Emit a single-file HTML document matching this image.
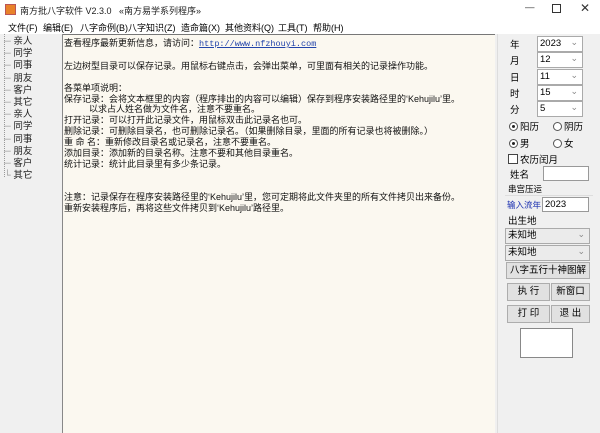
<!DOCTYPE html>
<html><head><meta charset="utf-8"><style>
*{margin:0;padding:0;box-sizing:border-box}
body{width:600px;height:433px;overflow:hidden;background:#f0f0f0;font-family:"Liberation Sans","Noto Sans CJK SC",sans-serif;font-size:9.5px;color:#000;position:relative}
.a{position:absolute;white-space:nowrap}
.title{left:0;top:0;width:600px;height:19px;background:#fff}
.menu{left:0;top:19px;width:600px;height:15px;background:#fff;font-size:9px}
.left{left:0;top:34px;width:63px;height:399px;background:#f0f0f0;border-right:1px solid #888}
.txt{left:63px;top:34px;width:432px;height:399px;background:#fbf8f0;border-top:1px solid #777}
.txt pre{font-family:"Liberation Sans","Noto Sans CJK SC",sans-serif;font-size:9px;line-height:10.9px;position:absolute;left:1px;top:3px;color:#111}
.sel{position:absolute;background:#fff;border:1px solid #aaa;height:16px;font-size:9.5px;padding-left:2px;line-height:14px}
.sel:after{content:"⌄";position:absolute;right:4px;top:-2px;color:#888;font-size:9px}
.btn{position:absolute;background:#e1e1e1;border:1px solid #adadad;text-align:center;font-size:9.5px}
.inp{position:absolute;background:#fff;border:1px solid #999}
.rad{display:inline-block;width:9px;height:9px;border:1px solid #555;border-radius:50%;vertical-align:-1px;margin-right:2px;position:relative;background:#fff}
.rad.on:after{content:"";position:absolute;left:2px;top:2px;width:3px;height:3px;background:#222;border-radius:50%}
</style></head><body>
<div class="a title">
 <div class="a" style="left:5px;top:4px;width:11px;height:11px;background:#e8822a;border:1px solid #b55"></div>
 <div class="a" style="left:20px;top:4px;font-size:9px;color:#222">南方批八字软件 V2.3.0 &nbsp;&nbsp;«南方易学系列程序»</div>
 <div class="a" style="left:525px;top:2px;color:#333">—</div>
 <div class="a" style="left:552px;top:4px;width:9px;height:9px;border:1px solid #333"></div>
 <div class="a" style="left:580px;top:1px;font-size:12px;color:#333">✕</div>
</div>
<div class="a menu">
 <span class="a" style="left:8px;top:2px">文件(F)</span>
 <span class="a" style="left:43px;top:2px">编辑(E)</span>
 <span class="a" style="left:80px;top:2px">八字命例(B)</span>
 <span class="a" style="left:128px;top:2px">八字知识(Z)</span>
 <span class="a" style="left:181px;top:2px">造命篇(X)</span>
 <span class="a" style="left:225px;top:2px">其他资料(Q)</span>
 <span class="a" style="left:278px;top:2px">工具(T)</span>
 <span class="a" style="left:313px;top:2px">帮助(H)</span>
</div>
<div class="a left">
 <div class="a" style="left:4px;top:0;width:1px;height:143px;border-left:1px dotted #999"></div>
 <div class="a" style="left:4px;top:2px;font-size:9.5px;line-height:12.2px;white-space:pre;color:#222"><span style="color:#999">─</span> 亲人
<span style="color:#999">─</span> 同学
<span style="color:#999">─</span> 同事
<span style="color:#999">─</span> 朋友
<span style="color:#999">─</span> 客户
<span style="color:#999">─</span> 其它
<span style="color:#999">─</span> 亲人
<span style="color:#999">─</span> 同学
<span style="color:#999">─</span> 同事
<span style="color:#999">─</span> 朋友
<span style="color:#999">─</span> 客户
<span style="color:#999">└</span> 其它</div>
</div>
<div class="a txt"><pre>查看程序最新更新信息，请访问：<span style="color:#2244aa;text-decoration:underline;font-family:'Liberation Mono',monospace;font-size:8.5px">http://www.nfzhouyi.com</span>

左边树型目录可以保存记录。用鼠标右键点击，会弹出菜单，可里面有相关的记录操作功能。

各菜单项说明：
保存记录：会将文本框里的内容（程序排出的内容可以编辑）保存到程序安装路径里的‘Kehujilu’里。
          以求占人姓名做为文件名，注意不要重名。
打开记录：可以打开此记录文件，用鼠标双击此记录名也可。
删除记录：可删除目录名，也可删除记录名。（如果删除目录，里面的所有记录也将被删除。）
重 命 名：重新修改目录名或记录名，注意不要重名。
添加目录：添加新的目录名称。注意不要和其他目录重名。
统计记录：统计此目录里有多少条记录。


注意：记录保存在程序安装路径里的‘Kehujilu’里，您可定期将此文件夹里的所有文件拷贝出来备份。
重新安装程序后，再将这些文件拷贝到‘Kehujilu’路径里。</pre></div>
<div class="a" style="left:497px;top:34px;width:103px;height:399px;background:#f0f0f0;border-left:1px solid #ddd"></div>
<span class="a" style="left:510px;top:37px">年</span><div class="sel" style="left:537px;top:36px;width:46px">2023</div>
<span class="a" style="left:510px;top:53px">月</span><div class="sel" style="left:537px;top:52px;width:46px">12</div>
<span class="a" style="left:510px;top:70px">日</span><div class="sel" style="left:537px;top:69px;width:46px">11</div>
<span class="a" style="left:510px;top:86px">时</span><div class="sel" style="left:537px;top:85px;width:46px">15</div>
<span class="a" style="left:510px;top:102px">分</span><div class="sel" style="left:537px;top:101px;width:46px">5</div>
<span class="a" style="left:509px;top:119px"><i class="rad on"></i>阳历</span>
<span class="a" style="left:553px;top:119px"><i class="rad"></i>阴历</span>
<span class="a" style="left:509px;top:136px"><i class="rad on"></i>男</span>
<span class="a" style="left:553px;top:136px"><i class="rad"></i>女</span>
<span class="a" style="left:508px;top:152px"><i style="display:inline-block;width:10px;height:10px;border:1px solid #444;background:#fff;vertical-align:-1px;margin-right:2px"></i>农历闰月</span>
<span class="a" style="left:510px;top:167px">姓名</span><div class="inp" style="left:543px;top:166px;width:46px;height:15px"></div>
<span class="a" style="left:508px;top:183px;font-size:8.5px">串宫压运</span>
<div class="a" style="left:505px;top:195px;width:88px;height:1px;background:#ddd"></div>
<span class="a" style="left:507px;top:199px;color:#1a2fb0;font-size:8.5px">输入流年</span><div class="inp" style="left:542px;top:197px;width:47px;height:15px;font-size:9.5px;padding:1px 2px">2023</div>
<span class="a" style="left:508px;top:213px">出生地</span>
<div class="sel" style="left:505px;top:228px;width:85px;background:#ebebeb">未知地</div>
<div class="sel" style="left:505px;top:245px;width:85px;background:#ebebeb">未知地</div>
<div class="btn" style="left:506px;top:262px;width:84px;height:17px;line-height:15px">八字五行十神图解</div>
<div class="btn" style="left:507px;top:283px;width:43px;height:18px;line-height:16px">执 行</div>
<div class="btn" style="left:551px;top:283px;width:39px;height:18px;line-height:16px">新窗口</div>
<div class="btn" style="left:507px;top:305px;width:43px;height:18px;line-height:16px">打 印</div>
<div class="btn" style="left:551px;top:305px;width:39px;height:18px;line-height:16px">退 出</div>
<div class="a" style="left:520px;top:328px;width:53px;height:30px;background:#fff;border:1px solid #888"></div>
</body></html>
